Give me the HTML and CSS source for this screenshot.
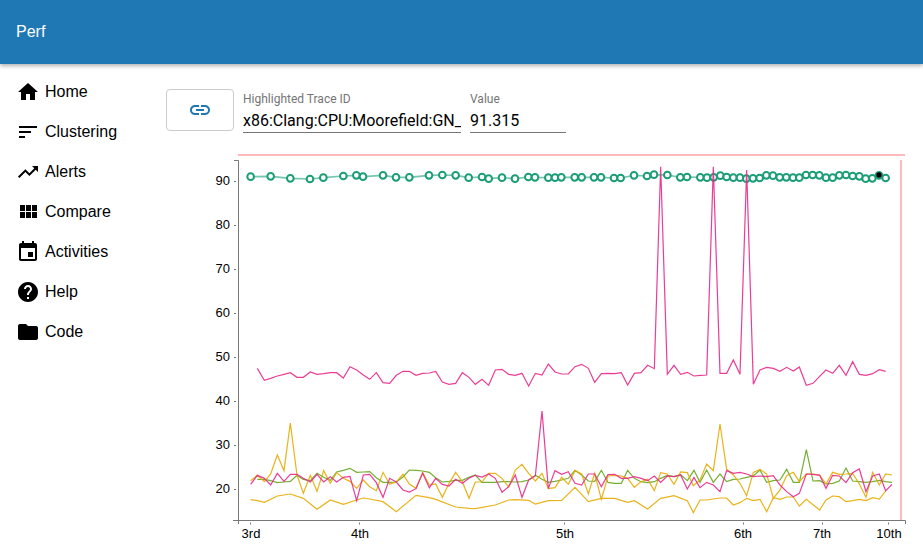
FILE: index.html
```html
<!DOCTYPE html>
<html lang="en">
<head>
<meta charset="utf-8">
<title>Perf</title>
<link rel="stylesheet" href="styles.css">
</head>
<body>
<header class="topbar"><span class="brand">Perf</span></header>
<div class="layout">
  <nav class="sidebar">
    <a class="nav-item"><svg class="nav-icon" viewBox="0 0 24 24"><path d="M10 20v-6h4v6h5v-8h3L12 3 2 12h3v8z"/></svg>Home</a>
    <a class="nav-item"><svg class="nav-icon" viewBox="0 0 24 24"><path d="M3 18h6v-2H3v2zM3 6v2h18V6H3zm0 7h12v-2H3v2z"/></svg>Clustering</a>
    <a class="nav-item"><svg class="nav-icon" viewBox="0 0 24 24"><path d="M16 6l2.29 2.29-4.88 4.88-4-4L2 16.59 3.41 18l6-6 4 4 6.3-6.29L22 12V6z"/></svg>Alerts</a>
    <a class="nav-item"><svg class="nav-icon" viewBox="0 0 24 24"><path d="M4 11h5V5H4v6zm0 7h5v-6H4v6zm6 0h5v-6h-5v6zm6 0h5v-6h-5v6zm-6-7h5V5h-5v6zm6-6v6h5V5h-5z"/></svg>Compare</a>
    <a class="nav-item"><svg class="nav-icon" viewBox="0 0 24 24"><path d="M17 12h-5v5h5v-5zM16 1v2H8V1H6v2H5c-1.11 0-1.99.9-1.99 2L3 19c0 1.1.89 2 2 2h14c1.1 0 2-.9 2-2V5c0-1.1-.9-2-2-2h-1V1h-2zm3 18H5V8h14v11z"/></svg>Activities</a>
    <a class="nav-item"><svg class="nav-icon" viewBox="0 0 24 24"><path d="M12 2C6.48 2 2 6.48 2 12s4.48 10 10 10 10-4.48 10-10S17.52 2 12 2zm1 17h-2v-2h2v2zm2.07-7.75l-.9.92C13.45 12.9 13 13.5 13 15h-2v-.5c0-1.1.45-2.1 1.17-2.83l1.24-1.26c.37-.36.59-.86.59-1.41 0-1.1-.9-2-2-2s-2 .9-2 2H8c0-2.21 1.79-4 4-4s4 1.79 4 4c0 .88-.36 1.68-.93 2.25z"/></svg>Help</a>
    <a class="nav-item"><svg class="nav-icon" viewBox="0 0 24 24"><path d="M10 4H4c-1.1 0-1.99.9-1.99 2L2 18c0 1.1.9 2 2 2h16c1.1 0 2-.9 2-2V8c0-1.1-.9-2-2-2h-8l-2-2z"/></svg>Code</a>
  </nav>
  <main class="content">
    <div class="controls">
      <button class="link-button" type="button" aria-label="Link"><svg class="link-icon" viewBox="0 0 24 24"><path d="M3.9 12c0-1.71 1.39-3.1 3.1-3.1h4V7H7c-2.76 0-5 2.24-5 5s2.24 5 5 5h4v-1.9H7c-1.71 0-3.1-1.39-3.1-3.1zM8 13h8v-2H8v2zm9-6h-4v1.9h4c1.71 0 3.1 1.39 3.1 3.1s-1.39 3.1-3.1 3.1h-4V17h4c2.76 0 5-2.24 5-5s-2.24-5-5-5z"/></svg></button>
      <label class="field field-id"><span class="field-label">Highlighted Trace ID</span><input class="field-input" type="text" value="x86:Clang:CPU:Moorefield:GN_" readonly></label>
      <label class="field field-value"><span class="field-label">Value</span><input class="field-input" type="text" value="91.315" readonly></label>
    </div>
    <svg class="chart" viewBox="150 150 773 398">
      <path class="bound" d="M238 155H905M901 160V520"/>
      <path class="axis" d="M234 160.500H238.500V524M233 520.500H905.500V524"/>
      <path class="tick" d="M234 181.500h2M234 225.500h2M234 269.500h2M234 313.500h2M234 357.500h2M234 401.500h2M234 445.500h2M234 489.500h2M250.500 522.500v2M359.500 522.500v2M564.500 522.500v2M743.500 522.500v2M822.500 522.500v2M888.500 522.500v2"/>
      <text class="y-label" x="230" y="185">90</text>
      <text class="y-label" x="230" y="229">80</text>
      <text class="y-label" x="230" y="273">70</text>
      <text class="y-label" x="230" y="317">60</text>
      <text class="y-label" x="230" y="361">50</text>
      <text class="y-label" x="230" y="405">40</text>
      <text class="y-label" x="230" y="449">30</text>
      <text class="y-label" x="230" y="493">20</text>
      <text class="x-label" x="251" y="538">3rd</text>
      <text class="x-label" x="360" y="538">4th</text>
      <text class="x-label" x="565" y="538">5th</text>
      <text class="x-label" x="743" y="538">6th</text>
      <text class="x-label" x="822" y="538">7th</text>
      <text class="x-label" x="889" y="538">10th</text>
      <g transform="translate(230 150) scale(.33333)">
        <polyline class="trace trace-teal" points="62,80 122,79 181,85 240,87 280,83 340,78 379,76 399,80 459,76 498,82 538,82 597,76 637,75 677,76 716,83 756,81 776,86 816,83 855,86 895,81 915,82 955,83 975,83 994,82 1034,82 1055,82 1092,82 1113,82 1152,84 1172,84 1212,76 1251,78 1272,74 1312,75 1351,82 1371,81 1411,82 1431,83 1451,82 1471,77 1490,81 1510,83 1530,83 1549,86 1569,85 1589,84 1609,76 1629,77 1649,82 1669,82 1689,83 1708,83 1728,75 1748,75 1768,76 1788,83 1808,83 1828,76 1848,75 1868,78 1888,79 1907,86 1927,85 1947,76 1967,84"/>
        <g class="dots">
          <circle cx="62" cy="80" r="10"/><circle cx="122" cy="79" r="10"/><circle cx="181" cy="85" r="10"/><circle cx="240" cy="87" r="10"/><circle cx="280" cy="83" r="10"/><circle cx="340" cy="78" r="10"/><circle cx="379" cy="76" r="10"/><circle cx="399" cy="80" r="10"/><circle cx="459" cy="76" r="10"/><circle cx="498" cy="82" r="10"/><circle cx="538" cy="82" r="10"/><circle cx="597" cy="76" r="10"/><circle cx="637" cy="75" r="10"/><circle cx="677" cy="76" r="10"/><circle cx="716" cy="83" r="10"/><circle cx="756" cy="81" r="10"/><circle cx="776" cy="86" r="10"/><circle cx="816" cy="83" r="10"/><circle cx="855" cy="86" r="10"/><circle cx="895" cy="81" r="10"/><circle cx="915" cy="82" r="10"/><circle cx="955" cy="83" r="10"/><circle cx="975" cy="83" r="10"/><circle cx="994" cy="82" r="10"/><circle cx="1034" cy="82" r="10"/><circle cx="1055" cy="82" r="10"/><circle cx="1092" cy="82" r="10"/><circle cx="1113" cy="82" r="10"/><circle cx="1152" cy="84" r="10"/><circle cx="1172" cy="84" r="10"/><circle cx="1212" cy="76" r="10"/><circle cx="1251" cy="78" r="10"/><circle cx="1272" cy="74" r="10"/><circle cx="1312" cy="75" r="10"/><circle cx="1351" cy="82" r="10"/><circle cx="1371" cy="81" r="10"/><circle cx="1411" cy="82" r="10"/><circle cx="1431" cy="83" r="10"/><circle cx="1451" cy="82" r="10"/><circle cx="1471" cy="77" r="10"/><circle cx="1490" cy="81" r="10"/><circle cx="1510" cy="83" r="10"/><circle cx="1530" cy="83" r="10"/><circle cx="1549" cy="86" r="10"/><circle cx="1569" cy="85" r="10"/><circle cx="1589" cy="84" r="10"/><circle cx="1609" cy="76" r="10"/><circle cx="1629" cy="77" r="10"/><circle cx="1649" cy="82" r="10"/><circle cx="1669" cy="82" r="10"/><circle cx="1689" cy="83" r="10"/><circle cx="1708" cy="83" r="10"/><circle cx="1728" cy="75" r="10"/><circle cx="1748" cy="75" r="10"/><circle cx="1768" cy="76" r="10"/><circle cx="1788" cy="83" r="10"/><circle cx="1808" cy="83" r="10"/><circle cx="1828" cy="76" r="10"/><circle cx="1848" cy="75" r="10"/><circle cx="1868" cy="78" r="10"/><circle cx="1888" cy="79" r="10"/><circle cx="1907" cy="86" r="10"/><circle cx="1927" cy="85" r="10"/><circle cx="1947" cy="76" r="10"/><circle cx="1967" cy="84" r="10"/>
        </g>
        <circle class="highlight" cx="1947" cy="75" r="8"/>
      </g>
      <g transform="translate(230 350) scale(.33333)">
        <polyline class="trace trace-yellow" points="62,449 82,452 103,457 142,438 181,432 220,445 261,478 301,450 340,463 380,450 400,444 419,447 459,455 499,485 558,436 598,443 617,448 677,471 717,475 736,476 796,465 836,450 856,449 896,451 916,462 955,452 995,451 1035,412 1075,455 1114,445 1154,445 1193,457 1213,452 1253,477 1292,445 1332,437 1372,452 1390,488 1410,450 1430,450 1450,447 1470,444 1490,444 1510,465 1530,458 1550,445 1570,452 1590,448 1610,485 1630,443 1650,448 1670,441 1690,441 1708,468 1729,448 1769,480 1788,450 1808,438 1828,440 1848,455 1868,452 1888,448 1908,452 1928,443 1948,447 1967,423"/>
        <polyline class="trace trace-green" points="82,388 103,388 122,392 142,398 162,396 181,394 201,376 220,388 241,392 261,370 281,382 301,391 320,366 340,361 360,355 380,367 400,366 419,365 439,383 459,397 479,397 499,396 519,381 538,360 558,361 578,363 598,367 617,383 637,396 657,394 677,391 697,391 717,382 736,375 756,397 776,397 796,397 816,395 836,395 856,396 876,395 896,390 916,376 936,388 955,397 975,394 995,390 1015,385 1035,361 1055,375 1075,393 1094,394 1114,361 1134,397 1154,400 1174,400 1193,361 1213,385 1233,395 1253,398 1273,395 1292,385 1312,376 1332,380 1352,374 1372,392 1392,361 1410,397 1430,360 1450,397 1470,372 1490,395 1510,388 1530,387 1550,382 1570,378 1590,360 1610,397 1630,392 1650,390 1670,358 1690,397 1708,397 1729,299 1749,393 1769,392 1788,402 1808,400 1828,393 1848,354 1868,393 1888,395 1908,397 1928,395 1948,391 1967,395 1986,397"/>
        <polyline class="trace trace-yellow" points="62,392 82,376 103,395 122,372 142,315 162,362 181,219 201,375 220,430 241,376 261,424 281,362 301,400 320,368 340,385 360,394 380,415 400,390 419,410 439,422 459,367 479,403 499,395 519,373 538,402 558,415 578,367 598,405 617,402 637,442 657,400 677,367 697,395 717,445 736,396 756,396 776,370 796,370 816,385 836,411 856,360 876,343 896,370 916,393 936,370 955,416 975,413 995,382 1015,403 1035,362 1055,372 1075,432 1094,370 1114,448 1134,378 1154,376 1174,378 1193,385 1213,412 1233,395 1253,388 1273,422 1292,368 1312,372 1332,403 1352,366 1372,368 1390,407 1410,390 1430,342 1450,362 1470,222 1490,358 1510,375 1530,400 1550,437 1570,367 1590,358 1610,372 1630,445 1650,420 1670,377 1690,367 1708,395 1729,372 1749,372 1769,375 1788,402 1808,367 1828,373 1848,372 1868,370 1888,402 1908,442 1928,367 1948,405 1967,372 1986,375"/>
        <polyline class="trace trace-pink" points="62,403 82,376 103,385 122,405 142,370 162,394 181,373 201,373 220,385 241,396 261,373 281,396 301,380 320,396 340,382 360,379 380,452 400,375 419,373 439,398 459,442 479,385 499,396 519,420 538,426 558,416 578,370 598,413 617,385 637,403 657,408 677,388 697,400 717,385 736,376 756,381 776,372 796,385 816,427 836,410 856,375 876,442 896,390 916,378 936,183 955,416 975,362 995,373 1015,365 1035,400 1055,405 1075,372 1094,372 1114,410 1134,374 1154,373 1174,385 1193,385 1213,380 1233,385 1253,392 1273,378 1292,397 1312,378 1332,380 1352,375 1372,417 1392,382 1410,413 1430,397 1450,405 1470,425 1490,362 1510,370 1530,367 1550,372 1570,380 1590,378 1610,380 1630,377 1650,405 1670,425 1690,440 1708,430 1729,372 1749,373 1769,376 1788,415 1808,376 1828,378 1848,398 1868,368 1888,357 1908,425 1928,378 1948,372 1967,423 1986,403"/>
        <polyline class="trace trace-pink" points="82,55 103,91 122,85 142,78 162,73 181,68 201,82 220,82 241,66 261,73 281,71 301,68 320,68 340,84 360,50 380,60 400,75 419,88 439,68 459,98 479,100 499,76 519,64 538,64 558,76 578,70 598,69 617,64 637,96 657,103 677,100 697,68 717,82 736,103 756,88 776,106 796,60 816,58 836,73 856,76 876,70 896,108 916,70 936,75 955,42 975,66 995,72 1015,72 1035,50 1055,43 1075,55 1094,97 1114,71 1134,70 1154,71 1174,68 1193,105 1213,70 1233,68 1253,46 1273,56 1292,-550 1312,73 1332,46 1352,73 1372,67 1392,78 1412,76 1430,75 1450,-550 1470,70 1490,70 1510,30 1530,73 1550,-540 1570,103 1590,60 1610,52 1630,55 1650,64 1670,52 1690,63 1708,51 1729,106 1749,100 1769,79 1788,60 1808,70 1828,46 1848,76 1868,35 1888,73 1908,76 1928,71 1948,59 1967,64"/>
      </g>
    </svg>
  </main>
</div>
</body>
</html>
```
FILE: styles.css
```css
* { box-sizing: border-box; }
html, body { margin: 0; height: 100%; overflow: hidden; background: #fff; }
body { font-family: "Liberation Sans", Arial, sans-serif; color: #000; }

.topbar {
  height: 64px;
  display: flex;
  align-items: center;
  padding-left: 16px;
  background: #1f78b4;
  color: #fff;
  font-size: 16px;
  box-shadow: 0 2px 4px rgba(0, 0, 0, .3);
  position: relative;
  z-index: 1;
}

.layout { display: flex; }

.sidebar {
  width: 150px;
  flex: none;
  padding-top: 7px;
  margin-top: 1px;
  display: flex;
  flex-direction: column;
}
.nav-item {
  height: 40px;
  display: flex;
  align-items: center;
  gap: 5px;
  padding-left: 16px;
  font-size: 16px;
}
.nav-icon { width: 24px; height: 24px; fill: #000; flex: none; }

.content { flex: 1; min-width: 0; }

.controls {
  display: flex;
  align-items: flex-start;
  padding: 25px 0 0 16px;
  height: 86px;
}
.link-button {
  width: 68px;
  height: 42px;
  padding: 0;
  display: flex;
  align-items: center;
  justify-content: center;
  background: #fff;
  border: 1px solid #ccc;
  border-radius: 4px;
}
.link-icon { width: 24px; height: 24px; fill: #1f78b4; }

.field { display: flex; flex-direction: column; margin-left: 9px; }
.field-id { width: 218px; }
.field-value { width: 96px; }
.field-label {
  font-family: Roboto, sans-serif;
  font-size: 12px;
  line-height: 20px;
  color: #757575;
}
.field-input {
  width: 100%;
  height: 24px;
  padding: 0 0 1px;
  border: 0;
  border-bottom: 1px solid #757575;
  outline: 0;
  background: transparent;
  font-family: Roboto, sans-serif;
  font-size: 16px;
  color: #000;
}

.chart { display: block; width: 773px; height: 398px; }
.chart text { font-family: "Liberation Sans", Arial, sans-serif; font-size: 13px; fill: #000; }
.chart .y-label { text-anchor: end; }
.chart .x-label { text-anchor: middle; }

.bound { fill: none; stroke: #ffbbbb; stroke-width: 2; }
.axis { fill: none; stroke: #777; stroke-width: 1; }
.tick { fill: none; stroke: #777; stroke-width: 1; }

.trace { fill: none; stroke-width: 3.6; stroke-opacity: .9; stroke-linejoin: miter; }
.trace-teal { stroke: #1b9e77; stroke-width: 5; stroke-opacity: .6; }
.trace-pink { stroke: #e7298a; }
.trace-green { stroke: #66a61e; }
.trace-yellow { stroke: #e6ab02; }

.dots circle { fill: #fff; stroke: #1b9e77; stroke-width: 6; }
.highlight { fill: #000; stroke: none; }
```
